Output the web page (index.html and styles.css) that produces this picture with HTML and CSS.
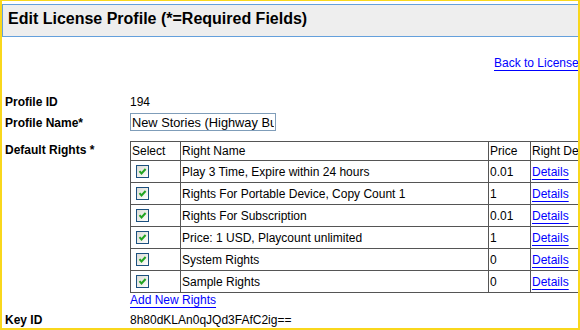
FILE: index.html
```html
<!DOCTYPE html>
<html>
<head>
<meta charset="utf-8">
<link rel="stylesheet" href="styles.css">
</head>
<body>
<div class="frame">
  <div class="page">
    <div class="title-bar"><h1 class="title">Edit License Profile (*=Required Fields)</h1></div>
    <div class="back-row"><a class="link" href="#">Back to License Profiles</a></div>
    <div class="form">
      <div class="row row-id">
        <div class="label">Profile ID</div>
        <div class="value">194</div>
      </div>
      <div class="row row-name">
        <div class="label">Profile Name*</div>
        <div class="value"><input class="text-input" type="text" value="New Stories (Highway Bulletin)"></div>
      </div>
      <div class="row row-rights">
        <div class="label label-top">Default Rights *</div>
        <div class="value">
          <table class="rights">
            <colgroup>
              <col class="c-select"><col class="c-name"><col class="c-price"><col class="c-details">
            </colgroup>
            <thead>
              <tr><th>Select</th><th>Right Name</th><th>Price</th><th>Right Details</th></tr>
            </thead>
            <tbody>
              <tr><td><span class="cb"><svg viewBox="0 0 11 11" width="11" height="11"><path d="M2.5 5.2 L4.5 7.4 L8.6 3" fill="none" stroke="#22a422" stroke-width="2"/></svg></span></td><td>Play 3 Time, Expire within 24 hours</td><td>0.01</td><td><a class="link" href="#">Details</a></td></tr>
              <tr><td><span class="cb"><svg viewBox="0 0 11 11" width="11" height="11"><path d="M2.5 5.2 L4.5 7.4 L8.6 3" fill="none" stroke="#22a422" stroke-width="2"/></svg></span></td><td>Rights For Portable Device, Copy Count 1</td><td>1</td><td><a class="link" href="#">Details</a></td></tr>
              <tr><td><span class="cb"><svg viewBox="0 0 11 11" width="11" height="11"><path d="M2.5 5.2 L4.5 7.4 L8.6 3" fill="none" stroke="#22a422" stroke-width="2"/></svg></span></td><td>Rights For Subscription</td><td>0.01</td><td><a class="link" href="#">Details</a></td></tr>
              <tr><td><span class="cb"><svg viewBox="0 0 11 11" width="11" height="11"><path d="M2.5 5.2 L4.5 7.4 L8.6 3" fill="none" stroke="#22a422" stroke-width="2"/></svg></span></td><td>Price: 1 USD, Playcount unlimited</td><td>1</td><td><a class="link" href="#">Details</a></td></tr>
              <tr><td><span class="cb"><svg viewBox="0 0 11 11" width="11" height="11"><path d="M2.5 5.2 L4.5 7.4 L8.6 3" fill="none" stroke="#22a422" stroke-width="2"/></svg></span></td><td>System Rights</td><td>0</td><td><a class="link" href="#">Details</a></td></tr>
              <tr><td><span class="cb"><svg viewBox="0 0 11 11" width="11" height="11"><path d="M2.5 5.2 L4.5 7.4 L8.6 3" fill="none" stroke="#22a422" stroke-width="2"/></svg></span></td><td>Sample Rights</td><td>0</td><td><a class="link" href="#">Details</a></td></tr>
            </tbody>
          </table>
          <div class="add-row"><a class="link" href="#">Add New Rights</a></div>
        </div>
      </div>
      <div class="row row-key">
        <div class="label">Key ID</div>
        <div class="value">8h80dKLAn0qJQd3FAfC2ig==</div>
      </div>
    </div>
  </div>
</div>
</body>
</html>
```
FILE: styles.css
```css
html, body {
  margin: 0;
  padding: 0;
  background: #ffffff;
}

.frame {
  width: 580px;
  height: 330px;
  box-sizing: border-box;
  border: 2px solid #f9d71c;
  border-top-width: 1px;
  overflow: hidden;
  font-family: "Liberation Sans", Arial, sans-serif;
  font-size: 12px;
  line-height: 14px;
  color: #000;
}

.page {
  width: 660px;
}

.title-bar {
  margin-top: 3px;
  height: 33px;
  box-sizing: border-box;
  border: 1px solid #64a0dc;
  background: #eeeeee;
  padding: 5px 5px 0;
}

.title {
  margin: 0;
  font-size: 16px;
  line-height: 18px;
  font-weight: bold;
  white-space: nowrap;
}

.back-row {
  margin-top: 19px;
  padding-left: 492px;
  white-space: nowrap;
}

.link {
  color: #0000ff;
  text-decoration: underline;
  text-underline-offset: 3px;
}

.form {
  margin-top: 25px;
  padding-left: 3px;
}

.row {
  display: flex;
  align-items: baseline;
}

.row-name {
  margin-top: 4px;
}

.row-rights {
  margin-top: 10px;
  align-items: flex-start;
}

.row-key {
  margin-top: 6px;
}

.label {
  width: 125px;
  flex: none;
  font-weight: bold;
  white-space: nowrap;
}

.label-top {
  padding-top: 2px;
}

.value {
  white-space: nowrap;
}

.text-input {
  width: 146px;
  height: 18px;
  box-sizing: border-box;
  margin: 0;
  padding: 0 1px;
  border: 1px solid #7f9db9;
  font-family: "Liberation Sans", Arial, sans-serif;
  font-size: 12.8px;
  color: #000;
  background: #fff;
  outline: none;
}

.rights {
  border-collapse: collapse;
  table-layout: fixed;
  width: 472px;
  border: 1px solid #555555;
}

.c-select { width: 50px; }
.c-name { width: 308px; }
.c-price { width: 42px; }
.c-details { width: 72px; }

.rights th,
.rights td {
  border: 1px solid #555555;
  padding: 0 1px;
  text-align: left;
  font-weight: normal;
  vertical-align: middle;
  white-space: nowrap;
  overflow: hidden;
}

.rights th {
  height: 18px;
}

.rights td {
  height: 21px;
}

.cb {
  display: block;
  width: 13px;
  height: 13px;
  box-sizing: border-box;
  margin: 0 0 0 4px;
  border: 1px solid #1c5180;
  background: linear-gradient(135deg, #dcdcd6 0%, #f4f4f0 70%, #ffffff 100%);
}

.cb svg {
  display: block;
}

.add-row {
  line-height: 14px;
}
```
